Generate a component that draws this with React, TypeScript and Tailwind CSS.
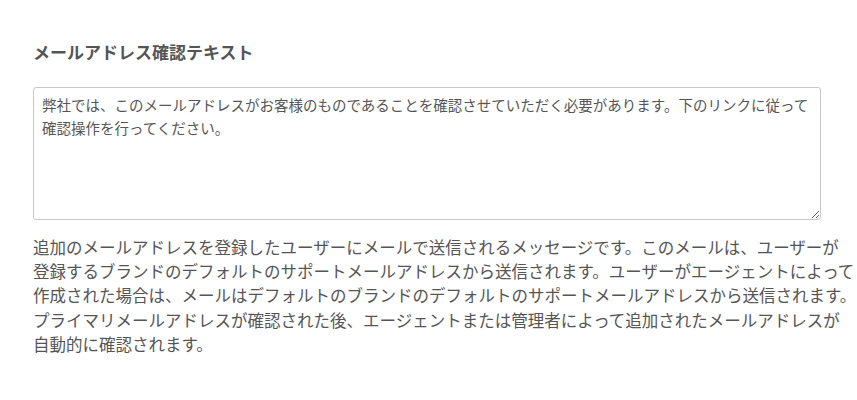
const FONT = '"Noto Sans CJK JP", "Noto Sans", sans-serif';

export default function App() {
  return (
    <div className="min-h-screen bg-white" style={{ fontFamily: FONT }}>
      <div className="pl-[33px] pr-[36px] pt-[39px]">
        {/* Field label */}
        <h2 className="text-[17px] leading-[26px] font-bold text-[#555]">
          メールアドレス確認テキスト
        </h2>

        {/* Text area */}
        <textarea
          className="mt-[22px] block w-[788px] h-[133px] rounded-[3px] border border-[#c8c8c8] px-[8px] py-[5px] text-[14.5px] leading-[23px] text-[#555] outline-none resize"
          style={{ fontFamily: FONT }}
          defaultValue={"弊社では、このメールアドレスがお客様のものであることを確認させていただく必要があります。下のリンクに従って\n確認操作を行ってください。"}
        />

        {/* Help text */}
        <p className="mt-[15px] text-[16.5px] leading-[24.2px] text-[#555] whitespace-nowrap">
          追加のメールアドレスを登録したユーザーにメールで送信されるメッセージです。このメールは、ユーザーが
          <br />
          登録するブランドのデフォルトのサポートメールアドレスから送信されます。ユーザーがエージェントによって
          <br />
          作成された場合は、メールはデフォルトのブランドのデフォルトのサポートメールアドレスから送信されます。
          <br />
          プライマリメールアドレスが確認された後、エージェントまたは管理者によって追加されたメールアドレスが
          <br />
          自動的に確認されます。
        </p>
      </div>
    </div>
  );
}
